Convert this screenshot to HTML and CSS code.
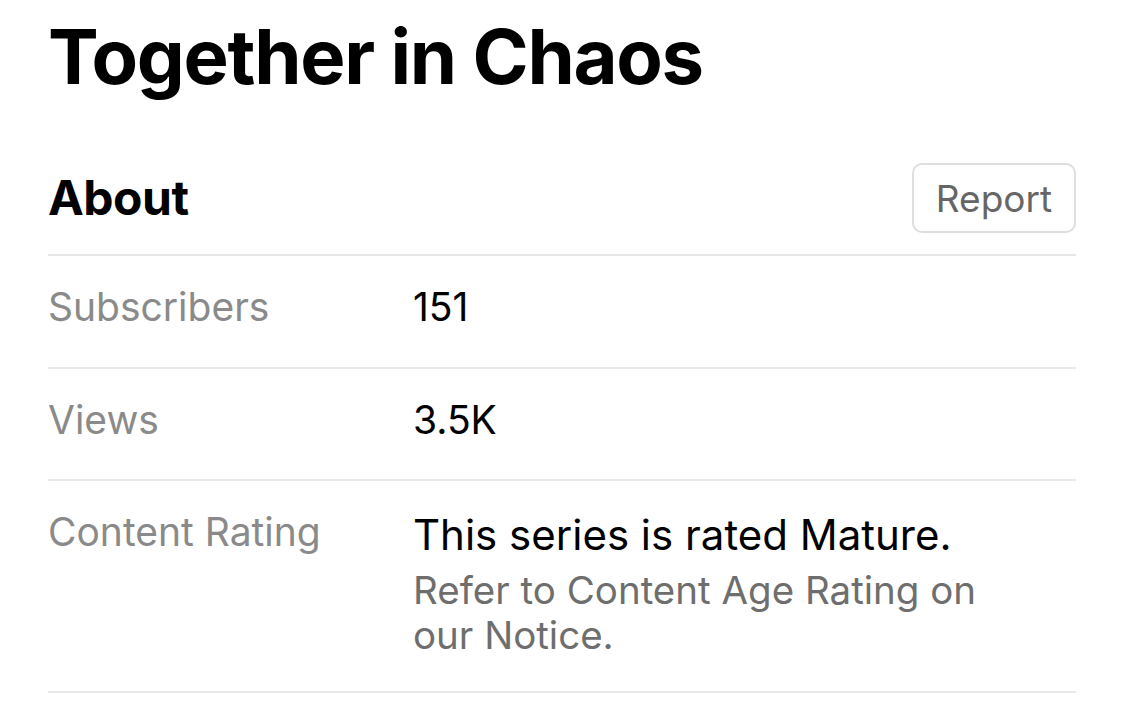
FILE: index.html
```html
<!DOCTYPE html>
<html lang="en">
<head>
<meta charset="utf-8">
<title>Together in Chaos</title>
<link rel="stylesheet" href="styles.css">
</head>
<body>
<main class="page">
  <h1 class="title">Together in Chaos</h1>
  <section class="about">
    <header class="about-head">
      <h2 class="about-title">About</h2>
      <button class="report-btn" type="button">Report</button>
    </header>
    <dl class="info">
      <div class="info-row">
        <dt class="info-label">Subscribers</dt>
        <dd class="info-value">151</dd>
      </div>
      <div class="info-row">
        <dt class="info-label">Views</dt>
        <dd class="info-value">3.5K</dd>
      </div>
      <div class="info-row info-row-tall">
        <dt class="info-label">Content Rating</dt>
        <dd class="info-value">
          <p class="rating-main">This series is rated Mature.</p>
          <p class="rating-note">Refer to Content Age Rating on<br>our Notice.</p>
        </dd>
      </div>
    </dl>
  </section>
</main>
</body>
</html>
```
FILE: styles.css
```css
* { box-sizing: border-box; }
html, body {
  margin: 0;
  padding: 0;
  background: #ffffff;
}
body {
  font-family: Inter, "Noto Sans", "Liberation Sans", sans-serif;
  color: #000;
}
.page {
  padding: 0 49px 0 48px;
}
.title {
  margin: 0;
  padding-top: 12px;
  font-size: 76px;
  line-height: 88px;
  font-weight: 700;
  letter-spacing: -1.3px;
}
.about-head {
  display: flex;
  align-items: center;
  justify-content: space-between;
  margin-top: 63px;
  padding-bottom: 21px;
  border-bottom: 2px solid #e6e6e6;
}
.about-title {
  margin: 0;
  font-size: 48px;
  font-weight: 700;
  letter-spacing: -0.5px;
  line-height: 1;
}
.report-btn {
  font-family: inherit;
  background: #fff;
  border: 2px solid #dedede;
  border-radius: 10px;
  width: 164px;
  height: 70px;
  font-size: 37px;
  color: #666;
  padding: 0;
}
.info {
  margin: 0;
}
.info-row {
  display: flex;
  border-bottom: 2px solid #e9e9e9;
  height: 113px;
  padding-top: 28px;
}
.info-row + .info-row {
  height: 112px;
}
.info-row-tall,
.info-row + .info-row-tall {
  height: 212px;
}
.info-label {
  width: 365px;
  flex: none;
  margin: 0;
  font-size: 39px;
  line-height: 45px;
  color: #8a8a8a;
}
.info-value {
  margin: 0;
  font-size: 39px;
  line-height: 45px;
  color: #000;
}
.rating-main {
  margin: 3px 0 0;
  font-size: 42px;
  line-height: 45px;
}
.rating-note {
  margin: 11px 0 0;
  font-size: 38.5px;
  line-height: 45px;
  color: #6e6e6e;
}
```
